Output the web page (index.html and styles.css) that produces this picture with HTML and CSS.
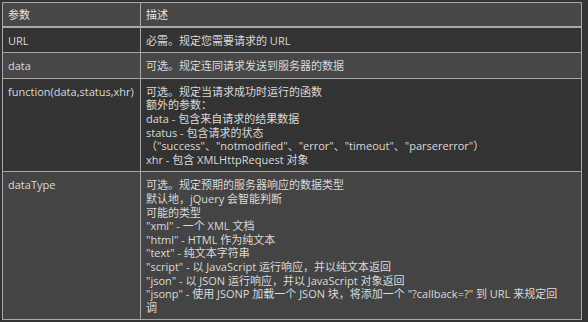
FILE: index.html
```html
<!DOCTYPE html>
<html lang="zh">
<head>
<meta charset="utf-8">
<link rel="stylesheet" href="styles.css">
</head>
<body>
<table class="ref">
  <thead>
    <tr class="head"><th class="c1">参数</th><th>描述</th></tr>
  </thead>
  <tbody>
    <tr class="dark"><td class="c1">URL</td><td>必需。规定您需要请求的 URL</td></tr>
    <tr class="light"><td class="c1">data</td><td>可选。规定连同请求发送到服务器的数据</td></tr>
    <tr class="dark"><td class="c1">function(data,status,xhr)</td><td>可选。规定当请求成功时运行的函数<br>额外的参数：<br>data - 包含来自请求的结果数据<br>status - 包含请求的状态<br>（"success"、"notmodified"、"error"、"timeout"、"parsererror"）<br>xhr - 包含 XMLHttpRequest 对象</td></tr>
    <tr class="light last"><td class="c1">dataType</td><td>可选。规定预期的服务器响应的数据类型<br>默认地，jQuery 会智能判断<br>可能的类型<br>"xml" - 一个 XML 文档<br>"html" - HTML 作为纯文本<br>"text" - 纯文本字符串<br>"script" - 以 JavaScript 运行响应，并以纯文本返回<br>"json" - 以 JSON 运行响应，并以 JavaScript 对象返回<br>"jsonp" - 使用 JSONP 加载一个 JSON 块，将添加一个 "?callback=?" 到 URL 来规定回<br>调</td></tr>
  </tbody>
</table>
</body>
</html>
```
FILE: styles.css
```css
html, body {
  margin: 0;
  padding: 0;
  background: #333333;
}
body {
  padding: 2px 0 0 2px;
  font-family: "Open Sans", "Noto Sans CJK SC", sans-serif;
  font-size: 11px;
  color: #dadada;
}
.ref {
  width: 580px;
  border-collapse: collapse;
  border: 1px solid #a8a8a8;
  table-layout: fixed;
}
.ref th, .ref td {
  border: 1px solid #a8a8a8;
  text-align: left;
  vertical-align: top;
  font-weight: normal;
  line-height: 13.6px;
  padding: 6px 5px 5px 5px;
}
.ref .c1 {
  width: 127px;
}
.head th {
  background: #474747;
  padding: 5px 5px 4px 5px;
  border-bottom: 2px solid #a8a8a8;
  color: #e4e4e4;
}
.dark td { background: #333333; }
.light td { background: #474747; }
.last td { background: #444444; }
```
